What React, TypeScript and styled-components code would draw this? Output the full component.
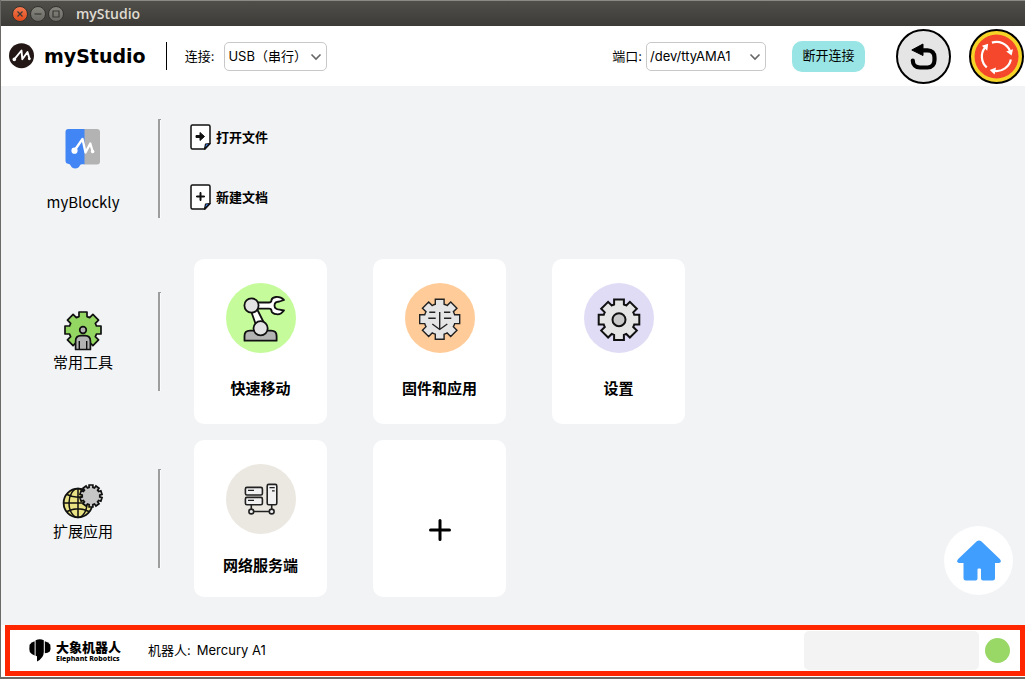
import React from "react";
import styled, { createGlobalStyle } from "styled-components";

const GlobalStyle = createGlobalStyle`
  * { box-sizing: border-box; }
  body {
    margin: 0;
    background: #f1f3f5;
    color: #000;
    font-family: Inter, "Noto Sans CJK SC", sans-serif;
    font-size: 13px;
  }
  button, select { font: inherit; color: inherit; }
  button { border: 0; padding: 0; background: none; cursor: pointer; }
  svg { display: block; flex: none; }
`;

const Window = styled.div`
  display: flex;
  flex-direction: column;
  min-height: 100vh;
  border-left: 1px solid #6b6a66;
  border-bottom: 2px solid #6b6a66;
`;

const TitleBar = styled.div`
  display: flex;
  align-items: center;
  gap: 2px;
  height: 26px;
  padding-left: 11px;
  border-top: 1px solid #8b8b85;
  background: linear-gradient(#504f4a, #3c3b37);
`;

const WindowButton = styled.button<{ $close?: boolean }>`
  width: 16px;
  height: 16px;
  border: 1px solid #34332f;
  border-radius: 50%;
  background: ${(p) => (p.$close ? "linear-gradient(#f4794f, #df4a1b)" : "linear-gradient(#86857e, #6a6963)")};
`;

const WindowTitle = styled.span`
  margin-left: 10px;
  color: #dfdbd2;
  font: 600 14px/18px "Open Sans", sans-serif;
`;

const Header = styled.header`
  display: flex;
  align-items: center;
  height: 60px;
  padding: 0 1px 0 8px;
  background: #fff;
`;

const Brand = styled.h1`
  margin: 0 20px 0 9px;
  font: bold 19px/24px "DejaVu Sans", sans-serif;
`;

const BrandRule = styled.div`
  width: 1px;
  height: 28px;
  margin-right: 18px;
  background: #000;
`;

const Field = styled.div<{ $push?: boolean; $gap: number }>`
  display: flex;
  align-items: center;
  gap: ${(p) => p.$gap}px;
  margin-left: ${(p) => (p.$push ? "auto" : "0")};
`;

const FieldLabel = styled.label`
  line-height: 20px;
`;

const SelectBox = styled.div<{ $width: number }>`
  position: relative;
  width: ${(p) => p.$width}px;
  svg {
    position: absolute;
    right: 5px;
    top: 11px;
    pointer-events: none;
  }
`;

const Select = styled.select`
  appearance: none;
  width: 100%;
  height: 29px;
  padding: 0 20px 1px 3px;
  border: 1px solid #c8c8c8;
  border-radius: 5px;
  background: #fff;
`;

const DisconnectButton = styled.button`
  width: 73px;
  height: 31px;
  margin: 0 31px 0 26px;
  padding-bottom: 3px;
  border-radius: 10px;
  background: #99e4e4;
`;

const HeaderActions = styled.div`
  display: flex;
  gap: 18px;
`;

const Main = styled.main`
  position: relative;
  display: flex;
  flex: 1;
  flex-direction: column;
  padding-top: 33px;
  padding-bottom: 28px;
`;

const Section = styled.section<{ $gap?: number }>`
  display: flex;
  align-items: center;
  margin-top: ${(p) => p.$gap ?? 0}px;
  padding-left: 32px;
`;

const SectionLabel = styled.div<{ $center?: boolean; $gap?: number }>`
  display: flex;
  flex-direction: column;
  align-items: center;
  justify-content: ${(p) => (p.$center ? "center" : "flex-start")};
  gap: ${(p) => p.$gap ?? 0}px;
  width: 100px;
  height: 99px;
  padding-top: ${(p) => (p.$center ? 0 : 6)}px;
  margin-right: 25px;
`;

const SectionTitle = styled.h2`
  margin: 0;
  font: 400 15px/22px "Noto Sans CJK SC", sans-serif;
`;

const Rule = styled.div`
  width: 3px;
  height: 99px;
  border: solid #9d9d9d;
  border-width: 1px 0 0 2px;
  background: #fafbfc;
`;

const FileActions = styled.div`
  display: flex;
  flex-direction: column;
  gap: 34px;
  margin-left: 29px;
  padding-bottom: 3px;
`;

const FileButton = styled.button`
  display: flex;
  align-items: center;
  gap: 5px;
  height: 26px;
  font-weight: 700;
`;

const FileLabel = styled.span`
  padding-bottom: 2px;
`;

const Cards = styled.div`
  display: flex;
  gap: 46px;
  margin-left: 33px;
`;

const Card = styled.button<{ $compact?: boolean }>`
  display: flex;
  flex-direction: column;
  align-items: center;
  justify-content: center;
  gap: ${(p) => (p.$compact ? 20 : 24)}px;
  width: 133px;
  padding: 24px 0 ${(p) => (p.$compact ? 21 : 25)}px;
  border-radius: 10px;
  background: #fff;
`;

const AddCard = styled(Card)`
  padding: 22px 0 0;
`;

const CardIcon = styled.span<{ $color: string }>`
  display: block;
  width: 70px;
  height: 70px;
  border-radius: 50%;
  background: ${(p) => p.$color};
`;

const CardTitle = styled.span`
  font: 700 15px/22px "Noto Sans CJK SC", sans-serif;
`;

const HomeButton = styled.button`
  position: absolute;
  right: 12px;
  bottom: 30px;
  display: grid;
  place-items: center;
  width: 69px;
  height: 69px;
  border-radius: 50%;
  background: #fff;
`;

const FooterArea = styled.div`
  padding: 0 0 1px 4px;
  background: #fff;
`;

const Footer = styled.footer`
  display: flex;
  align-items: center;
  height: 51px;
  padding: 0 10px 0 19px;
  border: 5px solid #ff2600;
`;

const Company = styled.div`
  display: flex;
  flex-direction: column;
  margin: 2px 27px 0 5px;
  white-space: nowrap;
`;

const CompanyName = styled.span`
  font: 900 13px/14px "Noto Sans CJK SC", sans-serif;
`;

const CompanyLatin = styled.span`
  font: 800 7px/9px "Noto Sans", sans-serif;
`;

const Robot = styled.p`
  display: flex;
  align-items: baseline;
  gap: 6px;
  margin: 0;
  padding-bottom: 2px;
`;

const Message = styled.output`
  width: 175px;
  height: 39px;
  margin-left: auto;
  border-radius: 5px;
  background: #f3f3f3;
`;

const StatusLight = styled.span`
  width: 25px;
  height: 25px;
  margin-left: 6px;
  border-radius: 50%;
  background: #99d866;
`;

/* Outline of a cog: straight-sided teeth of the given half width round a circular body. */
function gearPath(cx: number, cy: number, outer: number, inner: number, half: number, teeth = 8) {
  const body = Math.sqrt(inner * inner - half * half);
  const parts: string[] = [];
  for (let i = 0; i < teeth; i++) {
    const a = (i * 2 * Math.PI) / teeth - Math.PI / 2;
    const at = (along: number, side: number) =>
      `${(cx + along * Math.cos(a) - side * Math.sin(a)).toFixed(2)} ${(cy + along * Math.sin(a) + side * Math.cos(a)).toFixed(2)}`;
    parts.push(
      `${i === 0 ? "M" : `A${inner} ${inner} 0 0 1 `}${at(body, -half)}`,
      `L${at(outer, -half)}`,
      `L${at(outer, half)}`,
      `L${at(body, half)}`
    );
  }
  parts.push(`A${inner} ${inner} 0 0 1 ${cx - half} ${(cy - body).toFixed(2)}Z`);
  return parts.join("");
}

const WindowGlyph = ({ d }: { d: string }) => (
  <svg width="14" height="14" viewBox="0 0 14 14" fill="none" stroke="#3a3935" strokeWidth="1.2">
    <path d={d} />
  </svg>
);

const BrandMark = () => (
  <svg width="26" height="26" viewBox="0 0 26 26">
    <circle cx="12.5" cy="12.7" r="12.5" fill="#231815" />
    <path d="M5 16.7 L12.500 7.500 L13.300 16.200 L18.500 9 L20.500 15.700" fill="none" stroke="#fff" strokeWidth="1.9" strokeLinejoin="round" strokeLinecap="round" />
    <circle cx="5.3" cy="16.4" r="1.8" fill="#fff" />
    <circle cx="20.3" cy="15.8" r="1.4" fill="#fff" />
  </svg>
);

const Chevron = () => (
  <svg width="12" height="8" viewBox="0 0 12 8" fill="none" stroke="#666" strokeWidth="1.6">
    <path d="M1.5 1.5 L6 6 L10.5 1.5" />
  </svg>
);

const UndoIcon = () => (
  <svg width="55" height="55" viewBox="0 0 55 55">
    <circle cx="27.5" cy="27.5" r="26.5" fill="#e5e5e5" stroke="#000" strokeWidth="2" />
    <path d="M25 21.300 H31.500 C36 21.300 38.500 24 38.500 28.500 V31 C38.500 35.500 36 38.500 31.500 38.500 H24 C19.500 38.500 16.800 35.500 16.800 31.500" fill="none" stroke="#000" strokeWidth="4.2" strokeLinecap="round" />
    <path d="M15.800 21 L27 15 V26.500 Z" stroke="#000" strokeWidth="1" strokeLinejoin="round" />
  </svg>
);

const StopIcon = () => (
  <svg width="55" height="55" viewBox="0 0 55 55">
    <circle cx="27.5" cy="27.5" r="26.5" fill="#f5d327" stroke="#000" strokeWidth="2" />
    <circle cx="27.5" cy="27.5" r="22" fill="#f5472b" />
    {[0, 120, 240].map((turn) => (
      <g key={turn} transform={`rotate(${turn} 27.5 27.5)`}>
        <path d="M22.9 13.6 A14.6 14.6 0 0 1 41 21.9" fill="none" stroke="#fff" strokeWidth="2.2" />
        <path d="M37.2 22.4 L44 20.2 L42.6 26.6 Z" fill="#fff" />
      </g>
    ))}
  </svg>
);

const BlocklyIcon = () => (
  <svg width="36" height="45" viewBox="0 0 36 45">
    <path d="M19 4 H32 Q35 4 35 7 V36.500 Q35 39.500 32 39.500 H19 Z" fill="#b3b3b3" />
    <path d="M19.500 4 H3.500 Q.5 4 .5 7 V36 Q.5 38.500 3 38.800 Q5 39 5.500 40.300 Q7 43.600 10.200 43.600 Q13.500 43.600 15 40.300 Q15.500 39.300 17 39.300 H19.500 Z" fill="#4285f4" />
    <path d="M9.500 25.500 L17.500 14 L20.500 27.500 L25.300 18.500 L27.800 27" fill="none" stroke="#fff" strokeWidth="2.300" strokeLinecap="round" strokeLinejoin="round" />
    <circle cx="9.500" cy="25.700" r="3.100" fill="#fff" />
    <circle cx="27.600" cy="26.500" r="1.800" fill="#fff" />
  </svg>
);

const ToolsIcon = () => (
  <svg width="40" height="41" viewBox="0 0 40 41" stroke="#111" strokeWidth="1.7" strokeLinejoin="round">
    <path d={gearPath(20, 20, 18, 14, 4)} fill="#93d662" />
    <circle cx="20" cy="20" r="3.3" fill="#b3b3b3" />
    <path d="M12.600 39.500 V31 Q12.600 25.600 18 25.600 H22 Q27.400 25.600 27.400 31 V39.500 Z" fill="#b3b3b3" />
    <path d="M16.300 31 V39 M23.700 31 V39" strokeWidth="1.400" />
  </svg>
);

const ExtensionsIcon = () => (
  <svg width="42" height="45" viewBox="0 1 42 45" fill="none" stroke="#111" strokeWidth="1.5">
    <circle cx="16" cy="29" r="14.4" fill="#eae384" strokeWidth="1.8" />
    <ellipse cx="16" cy="29" rx="9" ry="14.4" />
    <path d="M16 14.600 V43.400 M1.600 29 H30.400 M5 20.500 Q16 26 27 20.500 M5 37.500 Q16 32 27 37.500" />
    <path d={gearPath(29, 22, 11, 8.8, 1.9, 10)} fill="#c6c6c6" strokeWidth="1.7" />
  </svg>
);

const FileIcon = ({ glyph }: { glyph: string }) => (
  <svg width="21" height="26" viewBox="0 0 21 26" stroke="#111" strokeLinejoin="round">
    <path d="M2.500 1 H18.500 Q20 1 20 2.500 V19.500 L15 25 H2.500 Q1 25 1 23.500 V2.500 Q1 1 2.500 1 Z" fill="#fff" strokeWidth="1.500" />
    <path d="M14.500 25 L15.500 20 L20 19.500 Z" fill="#4285f4" strokeWidth="1.200" />
    <path d={glyph} fill="#111" strokeWidth="1" />
  </svg>
);

const ArmIcon = () => (
  <svg width="70" height="70" viewBox="0 0 70 70" stroke="#111" strokeWidth="1.8" strokeLinejoin="round">
    <path d="M18.500 57.700 V53 Q18.500 47.700 24 47.700 H45 Q50.600 47.700 50.600 53 V57.700 Z" fill="#b3b3b3" />
    <path d="M25 28 L30 42 L38 40 L31 26 Z" fill="#fff" />
    <path d="M32 19.500 H43 Q45.500 19.500 45.500 17 Q46 14.500 50 14 Q54.500 13.500 58 17 L53.500 18.500 Q48.500 18.700 48.500 22.500 Q48.500 26.300 53.500 26.700 L58 27.500 Q54.500 32 50.500 31.200 Q46 30.600 45.500 28 Q45.500 25.700 43 25.700 H32 Z" fill="#fff" />
    <circle cx="25.500" cy="22.500" r="7.100" fill="#e3e3e3" />
    <circle cx="34.600" cy="45.300" r="7.100" fill="#e3e3e3" />
  </svg>
);

const FirmwareIcon = () => (
  <svg width="70" height="70" viewBox="0 0 70 70" fill="none" stroke="#222" strokeWidth="1.4">
    <path d={gearPath(34.7, 36.2, 20, 15.6, 4.4)} fill="#e5e5e5" />
    <path d="M24.300 29.300 H30.300 M23.300 35.300 H30.700 M39 29.300 H45.300 M39 35.300 H46.300 M34.700 29 V46.300 M27.300 41 L34.700 46.500 L42.300 41" />
  </svg>
);

const SettingsIcon = () => (
  <svg width="70" height="70" viewBox="0 0 70 70" stroke="#111" strokeWidth="2">
    <path d={gearPath(35, 36.7, 20.3, 16, 4.9)} fill="#e5e5e5" />
    <circle cx="35" cy="36.700" r="6.500" fill="#c9c9c9" />
  </svg>
);

const ServerIcon = () => (
  <svg width="70" height="70" viewBox="0 0 70 70" fill="#f1f1f1" stroke="#222" strokeWidth="1.6">
    <path d="M25.300 41 V47 M45.700 40 V47 M27 47.500 H44" />
    <rect x="19.400" y="23.400" width="17" height="7.600" rx="1.500" />
    <rect x="19.400" y="33.400" width="17" height="7.400" rx="1.500" />
    <rect x="41.200" y="20.400" width="9.600" height="20.400" rx="1.500" />
    <path d="M22 26.300 H28 M22 36.300 H28 M43.500 23.700 H48.700 M46 26.800 H48.700" strokeWidth="1.200" />
    <circle cx="25.300" cy="47.500" r="2.400" />
    <circle cx="45.700" cy="47.500" r="2.400" />
  </svg>
);

const PlusIcon = () => (
  <svg width="22" height="22" viewBox="0 0 22 22" stroke="#000" strokeWidth="3" strokeLinecap="round">
    <path d="M11 1.500 V20.500 M1.500 11 H20.500" />
  </svg>
);

const HomeIcon = () => (
  <svg width="44" height="41" viewBox="0 0 44 41" fill="#409eff">
    <path d="M19.800 1.300 Q22 -.5 24.200 1.300 L42.800 19 Q44.400 20.800 43.600 22 Q43.200 23 41.500 23 H38 V38 Q38 40.500 35.500 40.500 H26 Q24 40.500 24 38.500 V29.500 Q24 28.500 23 28.500 H21.500 Q20.500 28.500 20.500 29.500 V38.500 Q20.500 40.500 18.500 40.500 H9 Q6.500 40.500 6.500 38 V23 H2.500 Q.8 23 .4 22 Q-.4 20.800 1.200 19 Z" />
  </svg>
);

const ElephantIcon = () => (
  <svg width="22" height="23" viewBox="0 0 22 23">
    <path d="M5.600 2.300 V16.500 Q2.500 15.500 .8 13 Q0 10 .6 5.800 Q2.500 3 5.600 2.300 Z" />
    <path d="M6.600 1.300 Q11 -.6 14.800 1.300 V13 Q14.800 19 8 22.500 V17.300 L6.600 16.800 Z" />
    <path d="M15.800 2.300 Q19.500 3 21.300 5.800 Q22 10 20.800 12.500 Q19 14 15.800 14.300 Z" />
  </svg>
);

export default function App() {
  return (
    <Window lang="zh-CN">
      <GlobalStyle />
      <TitleBar>
        <WindowButton $close aria-label="关闭"><WindowGlyph d="M4.500 4.500 L9.500 9.500 M9.500 4.500 L4.500 9.500" /></WindowButton>
        <WindowButton aria-label="最小化"><WindowGlyph d="M3.500 7 H10.500" /></WindowButton>
        <WindowButton aria-label="最大化"><WindowGlyph d="M4 4 H10 V10 H4 Z" /></WindowButton>
        <WindowTitle>myStudio</WindowTitle>
      </TitleBar>

      <Header>
        <BrandMark />
        <Brand>myStudio</Brand>
        <BrandRule />
        <Field $gap={10}>
          <FieldLabel htmlFor="connection">连接:</FieldLabel>
          <SelectBox $width={103}>
            <Select id="connection"><option>USB（串行）</option></Select>
            <Chevron />
          </SelectBox>
        </Field>
        <Field $push $gap={4}>
          <FieldLabel htmlFor="port">端口:</FieldLabel>
          <SelectBox $width={120}>
            <Select id="port"><option>/dev/ttyAMA1</option></Select>
            <Chevron />
          </SelectBox>
        </Field>
        <DisconnectButton>断开连接</DisconnectButton>
        <HeaderActions>
          <button aria-label="返回"><UndoIcon /></button>
          <button aria-label="急停"><StopIcon /></button>
        </HeaderActions>
      </Header>

      <Main>
        <Section>
          <SectionLabel $gap={21}>
            <BlocklyIcon />
            <SectionTitle>myBlockly</SectionTitle>
          </SectionLabel>
          <Rule />
          <FileActions>
            <FileButton>
              <FileIcon glyph="M6 11.500 H10 V8.500 L14.500 12.500 L10 16.500 V13.500 H6 Z" />
              <FileLabel>打开文件</FileLabel>
            </FileButton>
            <FileButton>
              <FileIcon glyph="M10 8.500 H11 V12 H14.500 V13 H11 V16.500 H10 V13 H6.500 V12 H10 Z" />
              <FileLabel>新建文档</FileLabel>
            </FileButton>
          </FileActions>
        </Section>

        <Section $gap={41}>
          <SectionLabel $center>
            <ToolsIcon />
            <SectionTitle>常用工具</SectionTitle>
          </SectionLabel>
          <Rule />
          <Cards>
            <Card>
              <CardIcon $color="#c5fb9b"><ArmIcon /></CardIcon>
              <CardTitle>快速移动</CardTitle>
            </Card>
            <Card>
              <CardIcon $color="#ffcc99"><FirmwareIcon /></CardIcon>
              <CardTitle>固件和应用</CardTitle>
            </Card>
            <Card>
              <CardIcon $color="#e0dcf5"><SettingsIcon /></CardIcon>
              <CardTitle>设置</CardTitle>
            </Card>
          </Cards>
        </Section>

        <Section $gap={16}>
          <SectionLabel>
            <ExtensionsIcon />
            <SectionTitle>扩展应用</SectionTitle>
          </SectionLabel>
          <Rule />
          <Cards>
            <Card $compact>
              <CardIcon $color="#ebe8e1"><ServerIcon /></CardIcon>
              <CardTitle>网络服务端</CardTitle>
            </Card>
            <AddCard aria-label="添加"><PlusIcon /></AddCard>
          </Cards>
        </Section>

        <HomeButton aria-label="主页"><HomeIcon /></HomeButton>
      </Main>

      <FooterArea>
        <Footer>
          <ElephantIcon />
          <Company>
            <CompanyName>大象机器人</CompanyName>
            <CompanyLatin>Elephant Robotics</CompanyLatin>
          </Company>
          <Robot><span>机器人:</span><span>Mercury A1</span></Robot>
          <Message />
          <StatusLight />
        </Footer>
      </FooterArea>
    </Window>
  );
}
